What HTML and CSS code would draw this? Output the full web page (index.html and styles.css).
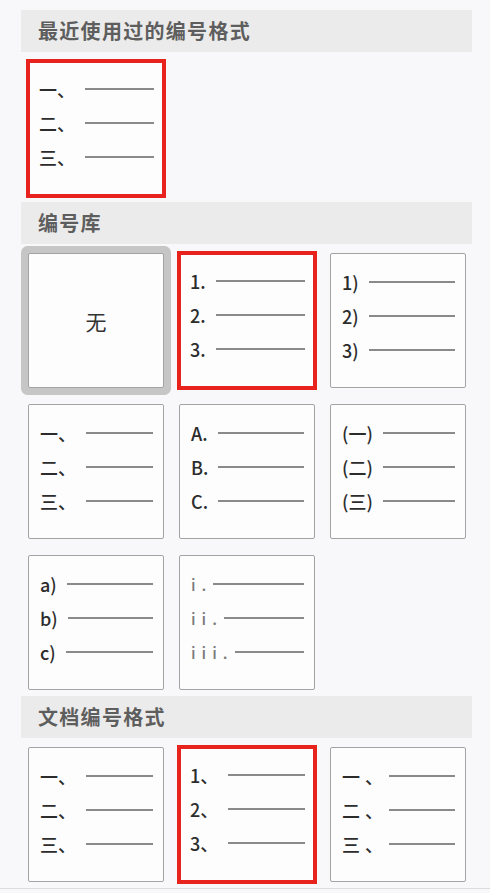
FILE: index.html
```html
<!DOCTYPE html>
<html lang="zh-CN">
<head>
    <meta charset="UTF-8">
    <meta name="viewport" content="width=device-width, initial-scale=1.0">
    <title>编号格式</title>
    <link rel="stylesheet" href="styles.css">
</head>
<body>
    <div class="panel">
        <div class="group-title">最近使用过的编号格式</div>
        <div class="grid">
            <div class="cell picked">
                <div class="row"><span class="num">一、</span><span class="rule"></span></div>
                <div class="row"><span class="num">二、</span><span class="rule"></span></div>
                <div class="row"><span class="num">三、</span><span class="rule"></span></div>
            </div>
        </div>

        <div class="group-title">编号库</div>
        <div class="grid">
            <div class="cell none">无</div>
            <div class="cell picked">
                <div class="row"><span class="num">1.</span><span class="rule"></span></div>
                <div class="row"><span class="num">2.</span><span class="rule"></span></div>
                <div class="row"><span class="num">3.</span><span class="rule"></span></div>
            </div>
            <div class="cell">
                <div class="row"><span class="num">1)</span><span class="rule"></span></div>
                <div class="row"><span class="num">2)</span><span class="rule"></span></div>
                <div class="row"><span class="num">3)</span><span class="rule"></span></div>
            </div>
            <div class="cell">
                <div class="row"><span class="num">一、</span><span class="rule"></span></div>
                <div class="row"><span class="num">二、</span><span class="rule"></span></div>
                <div class="row"><span class="num">三、</span><span class="rule"></span></div>
            </div>
            <div class="cell">
                <div class="row"><span class="num">A.</span><span class="rule"></span></div>
                <div class="row"><span class="num">B.</span><span class="rule"></span></div>
                <div class="row"><span class="num">C.</span><span class="rule"></span></div>
            </div>
            <div class="cell">
                <div class="row"><span class="num">(一)</span><span class="rule"></span></div>
                <div class="row"><span class="num">(二)</span><span class="rule"></span></div>
                <div class="row"><span class="num">(三)</span><span class="rule"></span></div>
            </div>
            <div class="cell">
                <div class="row"><span class="num">a)</span><span class="rule"></span></div>
                <div class="row"><span class="num">b)</span><span class="rule"></span></div>
                <div class="row"><span class="num">c)</span><span class="rule"></span></div>
            </div>
            <div class="cell">
                <div class="row"><span class="num roman">i.</span><span class="rule"></span></div>
                <div class="row"><span class="num roman">ii.</span><span class="rule"></span></div>
                <div class="row"><span class="num roman">iii.</span><span class="rule"></span></div>
            </div>
        </div>

        <div class="group-title">文档编号格式</div>
        <div class="grid">
            <div class="cell">
                <div class="row"><span class="num">一、</span><span class="rule"></span></div>
                <div class="row"><span class="num">二、</span><span class="rule"></span></div>
                <div class="row"><span class="num">三、</span><span class="rule"></span></div>
            </div>
            <div class="cell picked">
                <div class="row"><span class="num">1、</span><span class="rule"></span></div>
                <div class="row"><span class="num">2、</span><span class="rule"></span></div>
                <div class="row"><span class="num">3、</span><span class="rule"></span></div>
            </div>
            <div class="cell">
                <div class="row"><span class="num spaced">一、</span><span class="rule"></span></div>
                <div class="row"><span class="num spaced">二、</span><span class="rule"></span></div>
                <div class="row"><span class="num spaced">三、</span><span class="rule"></span></div>
            </div>
        </div>
    </div>
    <div class="foot-line"></div>
</body>
</html>
```

FILE: styles.css
```css
:root {
    --bg-page: #f8f8fa;
    --bg-title: #ebebeb;
    --bg-cell: #fdfdfd;
    --text-title: #5e5e5e;
    --text-num: #2c2c2c;
    --rule-gray: #8a8a8a;
    --cell-border: #a3a3a3;
    --pick-red: #e8221d;
}

body {
    margin: 0;
    background: var(--bg-page);
    font-family: "Noto Sans CJK SC", "Noto Sans", sans-serif;
}

.panel {
    width: 451px;
    margin-left: 21px;
    padding-top: 10px;
}

.group-title {
    height: 42px;
    line-height: 42px;
    padding-left: 17px;
    background: var(--bg-title);
    color: var(--text-title);
    font-size: 20px;
    font-weight: bold;
    letter-spacing: 1.3px;
}

.grid {
    display: grid;
    grid-template-columns: repeat(3, 136px);
    grid-auto-rows: 135px;
    column-gap: 15px;
    row-gap: 16px;
    padding: 9px 0 6px 7px;
}

.cell {
    box-sizing: border-box;
    border: 1px solid var(--cell-border);
    border-radius: 2px;
    background: var(--bg-cell);
    padding: 11px 10px 0 11px;
}

.cell.picked {
    border: 4px solid var(--pick-red);
    border-radius: 0;
    margin: -2px;
    padding: 9px 8px 0 9px;
}

.cell.none {
    display: flex;
    justify-content: center;
    align-items: center;
    padding: 0;
    box-shadow: 0 0 0 7px #c6c6c6;
    font-size: 21px;
    color: #333;
}

.row {
    display: flex;
    align-items: center;
    height: 34px;
}

.num {
    font-size: 18px;
    font-weight: 500;
    color: var(--text-num);
    white-space: nowrap;
}

.num.roman {
    letter-spacing: 6px;
    color: #7a7a7a;
    font-size: 16px;
}

.num.spaced {
    letter-spacing: 5px;
}

.rule {
    flex: 1;
    height: 2px;
    margin-left: 10px;
    background: var(--rule-gray);
}

.roman + .rule,
.spaced + .rule {
    margin-left: 1px;
}

.foot-line {
    border-top: 1px solid #dcdcdc;
}
```
